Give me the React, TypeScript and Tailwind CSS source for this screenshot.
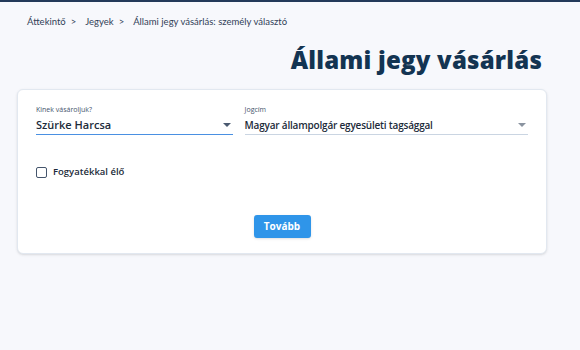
function SelectField({
  label,
  value,
  active,
  width,
  valueClass,
}: {
  label: string;
  value: string;
  active?: boolean;
  width: string;
  valueClass: string;
}) {
  return (
    <div className={`${width} flex flex-col`}>
      <span className="text-[7px] leading-[9px] text-slate-600">{label}</span>
      <div
        className={`mt-[4px] flex items-center justify-between pb-[2px] border-b ${
          active ? 'border-[#4a90e2]' : 'border-slate-300'
        }`}
      >
        <span className={`leading-[14px] font-semibold text-[#1c2b3a] ${valueClass}`}>{value}</span>
        <svg width="8" height="5" viewBox="0 0 8 5" className="mr-[2px]">
          <path d="M0 0 L8 0 L4 4 Z" fill={active ? '#4a5a70' : '#8a93a0'} />
        </svg>
      </div>
    </div>
  );
}

export default function App() {
  const crumbs = ['Áttekintő', 'Jegyek', 'Állami jegy vásárlás: személy választó'];
  return (
    <div className="w-[580px] h-[350px] bg-[#f7f8fc] border-t-2 border-[#23395a] font-['Open_Sans',sans-serif]">
      <div className="flex items-center pl-[27px] pt-[13px] text-[9.5px] text-slate-700 font-['Lato',sans-serif]">
        {crumbs.map((c, i) => (
          <span key={c} className="flex items-center">
            {c}
            {i < crumbs.length - 1 && <span className="ml-[5px] mr-[9px]">&gt;</span>}
          </span>
        ))}
      </div>
      <div className="flex justify-end pr-[38px] pt-[16px]">
        <h1 className="text-[24px] leading-[30px] font-extrabold text-[#133452] tracking-[0.2px]">Állami jegy vásárlás</h1>
      </div>
      <div className="mx-[17px] mt-[14px] w-[530px] h-[165px] bg-white rounded-[6px] border border-slate-200 shadow-sm px-[18px] pt-[15px]">
        <div className="flex gap-[12px]">
          <SelectField
            label="Kinek vásároljuk?"
            value="Szürke Harcsa"
            active
            width="w-[197px]"
            valueClass="text-[11px]"
          />
          <SelectField
            label="Jogcím"
            value="Magyar állampolgár egyesületi tagsággal"
            width="w-[284px]"
            valueClass="text-[10px] tracking-[-0.2px]"
          />
        </div>
        <label className="mt-[30px] flex items-center gap-[6px]">
          <span className="w-[11px] h-[11px] border border-slate-600 rounded-[2px] bg-white" />
          <span className="text-[9.5px] font-semibold text-[#1c2b3a]">Fogyatékkal élő</span>
        </label>
        <div className="mt-[35px] flex justify-center">
          <button className="w-[57px] h-[23px] rounded-[3px] bg-[#2f95e9] text-white text-[10px] font-bold shadow">
            Tovább
          </button>
        </div>
      </div>
    </div>
  );
}
